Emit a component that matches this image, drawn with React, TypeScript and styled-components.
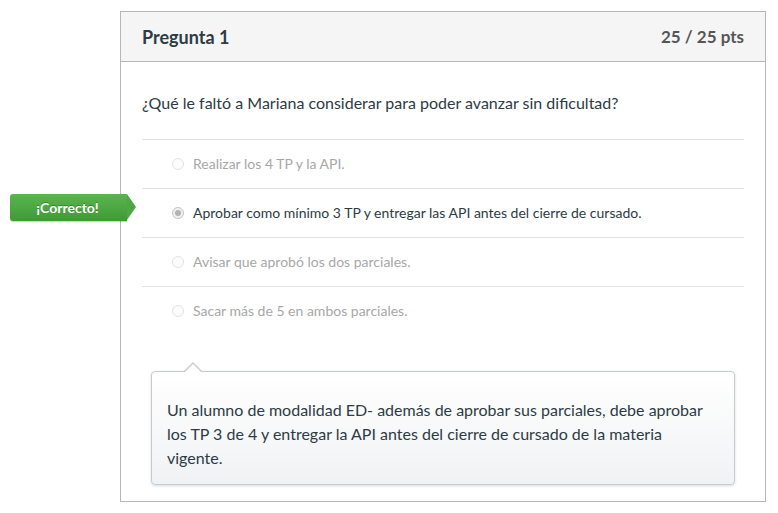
import styled, { createGlobalStyle } from "styled-components";

const GlobalStyle = createGlobalStyle`
  body {
    margin: 0;
    background: #fff;
    font-family: Lato, "Open Sans", "Liberation Sans", sans-serif;
    color: #2d3b45;
  }
`;

const Page = styled.div`
  padding: 11px 0 0 120px;
`;

const Card = styled.div`
  width: 644px;
  border: 1px solid #b7b7b7;
  background: #fff;
`;

const Header = styled.div`
  display: flex;
  align-items: center;
  justify-content: space-between;
  height: 49px;
  padding: 0 21px;
  background: #f5f5f5;
  border-bottom: 1px solid #b7b7b7;
`;

const Title = styled.h2`
  margin: 0;
  font-size: 18px;
  font-weight: 700;
  color: #2d3b45;
`;

const Points = styled.span`
  font-size: 17px;
  font-weight: 700;
  color: #555;
`;

const Body = styled.div`
  padding: 29px 21px 16px;
`;

const Question = styled.p`
  margin: 0 0 24px;
  font-size: 16px;
  line-height: 24px;
`;

const Answers = styled.div`
  display: flex;
  flex-direction: column;
`;

const Row = styled.div<{ $selected?: boolean }>`
  position: relative;
  display: flex;
  align-items: center;
  gap: 9px;
  height: 47px;
  padding: 0 0 1px 30px;
  border-top: 1px solid #e3e3e3;
  font-size: 14px;
  color: ${(p) => (p.$selected ? "#2d3b45" : "#a7a7a7")};
`;

const Radio = styled.span<{ $checked?: boolean }>`
  box-sizing: border-box;
  width: 12px;
  height: 12px;
  border-radius: 50%;
  border: 1px solid ${(p) => (p.$checked ? "#c4c4c4" : "#e2e2e2")};
  background: ${(p) => (p.$checked ? "#f0f0f0" : "#fcfcfc")};
  display: flex;
  align-items: center;
  justify-content: center;
  margin-top: 1px;

  &::after {
    content: "";
    display: ${(p) => (p.$checked ? "block" : "none")};
    width: 6px;
    height: 6px;
    border-radius: 50%;
    background: #b3b3b3;
  }
`;

const Badge = styled.div`
  position: absolute;
  left: -132px;
  top: 5px;
  width: 117px;
  height: 27px;
  box-sizing: border-box;
  display: flex;
  align-items: center;
  justify-content: center;
  padding-right: 2px;
  border-radius: 3px 0 0 3px;
  background: linear-gradient(#5bb450, #3f9a34);
  color: #fff;
  font-size: 14px;
  font-weight: 700;
  text-shadow: 0 -1px 0 rgba(0, 0, 0, 0.25);
  box-shadow: 0 1px 1px rgba(0, 0, 0, 0.2);

  &::after {
    content: "";
    position: absolute;
    right: -9px;
    top: 0;
    border-top: 13.5px solid transparent;
    border-bottom: 13.5px solid transparent;
    border-left: 9px solid #4ea743;
  }
`;

const Feedback = styled.div`
  position: relative;
  margin: 36px 9px 0;
  padding: 26px 15px 14px;
  border: 1px solid #c6cbd0;
  border-radius: 4px;
  background: linear-gradient(#fff, #f1f2f4);
  box-shadow: 0 1px 3px rgba(0, 0, 0, 0.15);
  font-size: 16px;
  line-height: 24px;
  color: #2d3b45;

  &::before {
    content: "";
    position: absolute;
    left: 31px;
    top: -10px;
    border-left: 10px solid transparent;
    border-right: 10px solid transparent;
    border-bottom: 10px solid #c6cbd0;
  }

  &::after {
    content: "";
    position: absolute;
    left: 32px;
    top: -8px;
    border-left: 9px solid transparent;
    border-right: 9px solid transparent;
    border-bottom: 9px solid #fff;
  }
`;

const answers = [
  { text: "Realizar los 4 TP y la API.", selected: false },
  {
    text: "Aprobar como mínimo 3 TP y entregar las API antes del cierre de cursado.",
    selected: true,
  },
  { text: "Avisar que aprobó los dos parciales.", selected: false },
  { text: "Sacar más de 5 en ambos parciales.", selected: false },
];

export default function App() {
  return (
    <Page>
      <GlobalStyle />
      <Card>
        <Header>
          <Title>Pregunta 1</Title>
          <Points>25 / 25 pts</Points>
        </Header>
        <Body>
          <Question>
            ¿Qué le faltó a Mariana considerar para poder avanzar sin dificultad?
          </Question>
          <Answers>
            {answers.map((a, idx) => (
              <Row key={idx} $selected={a.selected}>
                {a.selected && <Badge>¡Correcto!</Badge>}
                <Radio $checked={a.selected} />
                <span>{a.text}</span>
              </Row>
            ))}
          </Answers>
          <Feedback>
            Un alumno de modalidad ED- además de aprobar sus parciales, debe aprobar
            los TP 3 de 4 y entregar la API antes del cierre de cursado de la materia
            vigente.
          </Feedback>
        </Body>
      </Card>
    </Page>
  );
}
